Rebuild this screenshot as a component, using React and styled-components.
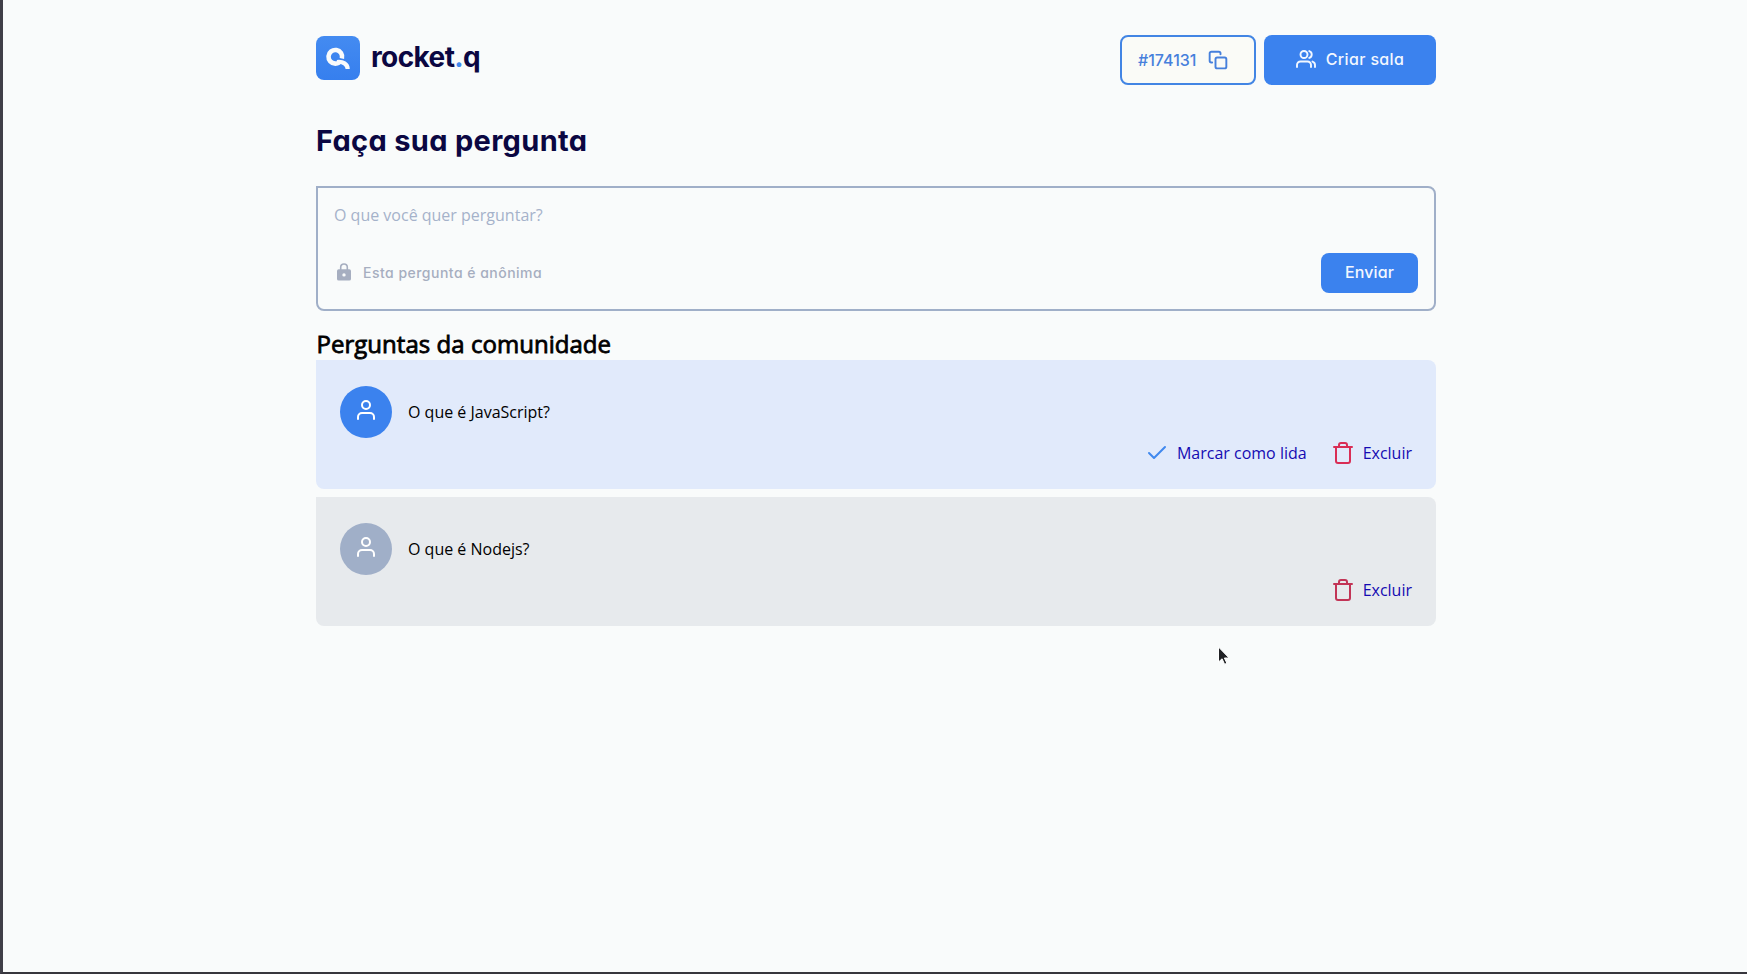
import React from "react";
import styled, { createGlobalStyle } from "styled-components";

const GlobalStyle = createGlobalStyle`
  * { box-sizing: border-box; margin: 0; padding: 0; }
  body { background: #f9fbfb; font-family: "Open Sans", "Noto Sans", sans-serif; font-size: 16px; color: #000; }
`;

const display = `font-family: Inter, "Open Sans", sans-serif; font-feature-settings: "cv11";`;

const Page = styled.div`
  height: 974px;
  overflow: hidden;
  border-left: 3px solid #403f48;
  border-bottom: 2px solid #37363d;
  padding-left: 313px;
`;
const Container = styled.div`width: 1120px;`;

const Header = styled.header`
  display: flex;
  justify-content: space-between;
  padding-top: 35px;
  height: 85px;
`;
const Brand = styled.div`
  display: flex;
  gap: 11px;
  padding-top: 1px;
`;
const BrandName = styled.span`
  ${display}
  font-size: 28px;
  line-height: 42px;
  font-weight: 700;
  letter-spacing: ${(p) => p.$tracking};
  color: #0b0742;
  span { color: #4089ee; }
`;
const HeaderActions = styled.div`
  display: flex;
  gap: 8px;
`;
const Button = styled.button`
  ${display}
  display: flex;
  align-items: center;
  justify-content: ${(p) => p.$justify || "center"};
  gap: ${(p) => p.$gap || "10px"};
  width: ${(p) => p.$width};
  height: ${(p) => p.$height};
  padding: ${(p) => p.$padding || "0 0 2px"};
  border: ${(p) => (p.$outlined ? "2px solid #4285e4" : "0")};
  border-radius: 8px;
  background: ${(p) => (p.$outlined ? "#fafbf7" : "#3b82ee")};
  color: ${(p) => (p.$outlined ? "#4680dc" : "#f2f7ff")};
  font-size: 16px;
  font-weight: 500;
  line-height: 24px;
  letter-spacing: ${(p) => p.$tracking || "0"};
`;
const Title = styled.h1`
  ${display}
  margin-top: 32px;
  height: 48px;
  line-height: 48px;
  font-size: 29px;
  font-weight: 700;
  letter-spacing: ${(p) => p.$tracking};
  color: #0b0742;
  white-space: nowrap;
`;
const Form = styled.form`
  margin-top: 21px;
  height: 125px;
  border: 2px solid #a0afc8;
  border-radius: 0 8px 8px 8px;
  padding: 16px;
  display: flex;
  flex-direction: column;
  justify-content: space-between;
`;
const Prompt = styled.p`
  color: #a5b2ca;
  line-height: 22px;
`;
const FormFooter = styled.div`
  display: flex;
  justify-content: space-between;
  align-items: center;
`;
const Privacy = styled.div`
  ${display}
  display: flex;
  align-items: center;
  gap: 9px;
  padding-bottom: 2px;
  font-size: 14px;
  font-weight: 500;
  letter-spacing: ${(p) => p.$tracking};
  color: #a6aec0;
`;
const SectionTitle = styled.h2`
  margin-top: 16px;
  height: 33px;
  font-size: 24px;
  line-height: 33px;
  font-weight: 400;
  -webkit-text-stroke: 0.8px #000;
  padding-left: 0.5px;
  letter-spacing: ${(p) => p.$tracking};
`;
const List = styled.div`
  display: flex;
  flex-direction: column;
  gap: 8px;
`;
const Card = styled.article`
  height: 129px;
  padding: 26.4px 24px 24px;
  border-radius: 0 8px 8px 8px;
  background: ${(p) => (p.$read ? "#e7eaed" : "#e1eafb")};
`;
const Question = styled.div`
  display: flex;
  align-items: center;
  gap: 16px;
  line-height: 22px;
`;
const Avatar = styled.div`
  width: 52px;
  height: 52px;
  border-radius: 50%;
  padding: 11.6px 14px;
  background: ${(p) => (p.$read ? "#a0afc8" : "#3b82ee")};
`;
const Actions = styled.div`
  display: flex;
  justify-content: flex-end;
  gap: 24px;
  margin-top: 2.6px;
`;
const Action = styled.a`
  display: flex;
  align-items: center;
  gap: 8px;
  line-height: 24px;
  color: #150ab2;
`;
const Pointer = styled.svg`
  position: absolute;
  left: 1216px;
  top: 645px;
`;
const Icon = styled.svg`
  display: block;
  flex-shrink: 0;
`;

const Stroke = ({ size = 24, color, width = 2, children }) => (
  <Icon width={size} height={size} viewBox="0 0 24 24" fill="none" stroke={color}
    strokeWidth={width} strokeLinecap="round" strokeLinejoin="round">
    {children}
  </Icon>
);
const CopyIcon = () => (
  <Stroke size={20} color="#4680dc" width={2.3}>
    <rect x="9" y="9" width="13" height="13" rx="2" />
    <path d="M5 15H4a2 2 0 0 1-2-2V4a2 2 0 0 1 2-2h9a2 2 0 0 1 2 2v1" />
  </Stroke>
);
const UsersIcon = () => (
  <Icon width="20" height="18" viewBox="0 0 20 18" fill="none" stroke="#f2f7ff"
    strokeWidth="1.9" strokeLinecap="round" strokeLinejoin="round">
    <path d="M1 17v-2a3.500 3.500 0 0 1 3.500-3.500h7A3.500 3.500 0 0 1 15 15v2" />
    <circle cx="8" cy="4.500" r="3.500" />
    <path d="M19 17v-2a3.600 3.600 0 0 0-2.500-3.400M13.300 1.100a3.600 3.600 0 0 1 0 6.800" />
  </Icon>
);
const UserIcon = () => (
  <Stroke color="#fff">
    <path d="M20 21v-2a4 4 0 0 0-4-4H8a4 4 0 0 0-4 4v2" />
    <circle cx="12" cy="7" r="4" />
  </Stroke>
);
const CheckIcon = () => <Stroke color="#4089ee"><path d="M20 6 9 17l-5-5" /></Stroke>;
const TrashIcon = ({ color }) => (
  <Stroke color={color}>
    <path d="M3 6h18M19 6v14a2 2 0 0 1-2 2H7a2 2 0 0 1-2-2V6m3 0V4a2 2 0 0 1 2-2h4a2 2 0 0 1 2 2v2" />
  </Stroke>
);
const LockIcon = () => (
  <Icon width="20" height="20" viewBox="0 0 20 20">
    <path d="M6.700 8V5.300a3.300 3.300 0 0 1 6.600 0V8" fill="none" stroke="#a6aec0" strokeWidth="1.600" />
    <path fillRule="evenodd" fill="#a6aec0" d="M4.700 7.200h10.600A1.700 1.700 0 0 1 17 8.900v8a1.700 1.700 0 0 1-1.700 1.700H4.700A1.700 1.700 0 0 1 3 16.900V8.900a1.700 1.700 0 0 1 1.700-1.700ZM10 11.200a1.700 1.700 0 1 0 0 3.400 1.700 1.700 0 0 0 0-3.400Z" />
  </Icon>
);
const LogoMark = () => (
  <Icon width="44" height="44" viewBox="0 0 44 44">
    <defs>
      <linearGradient id="mark" x1="0" y1="0" x2="0" y2="1">
        <stop offset="0" stopColor="#448bf1" />
        <stop offset="1" stopColor="#367fee" />
      </linearGradient>
    </defs>
    <rect width="44" height="44" rx="8" fill="url(#mark)" />
    <g fill="none" stroke="#f9fbfb">
      <path d="M25.900 22.500A6.800 6.800 0 1 0 19.300 27.600Q21.500 27.600 23 26.600" strokeWidth="4.600" />
      <path d="M21 26C27 25.300 31.500 28 31.700 33" strokeWidth="4.200" />
    </g>
  </Icon>
);

const QuestionCard = ({ text, read }) => (
  <Card $read={read}>
    <Question>
      <Avatar $read={read}><UserIcon /></Avatar>
      <p>{text}</p>
    </Question>
    <Actions>
      {!read && <Action><CheckIcon />Marcar como lida</Action>}
      <Action><TrashIcon color={read ? "#c23456" : "#d92d55"} />Excluir</Action>
    </Actions>
  </Card>
);

export default function App() {
  return (
    <Page>
      <GlobalStyle />
      <Container>
        <Header>
          <Brand>
            <LogoMark />
            <BrandName $tracking="-0.6px">rocket<span>.</span>q</BrandName>
          </Brand>
          <HeaderActions>
            <Button $outlined $width="136px" $height="50px" $justify="flex-start" $gap="12px" $padding="0 16px 1px">
              #174131<CopyIcon />
            </Button>
            <Button $width="172px" $height="50px" $tracking="0.35px">
              <UsersIcon />Criar sala
            </Button>
          </HeaderActions>
        </Header>
        <Title $tracking="0.32px">Faça sua pergunta</Title>
        <Form>
          <Prompt>O que você quer perguntar?</Prompt>
          <FormFooter>
            <Privacy $tracking="0.48px"><LockIcon />Esta pergunta é anônima</Privacy>
            <Button type="button" $width="97px" $height="40px" $tracking="0.1px">Enviar</Button>
          </FormFooter>
        </Form>
        <SectionTitle $tracking="0.03px">Perguntas da comunidade</SectionTitle>
        <List>
          <QuestionCard text="O que é JavaScript?" />
          <QuestionCard text="O que é Nodejs?" read />
        </List>
      </Container>
      <Pointer width="16" height="24" viewBox="0 0 16 24">
        <path d="M2.500 2v15l3.600-3.200 2.500 5.500 2.300-1-2.500-5.300h4.700Z" fill="#202124" stroke="#fff" strokeWidth="1" />
      </Pointer>
    </Page>
  );
}
